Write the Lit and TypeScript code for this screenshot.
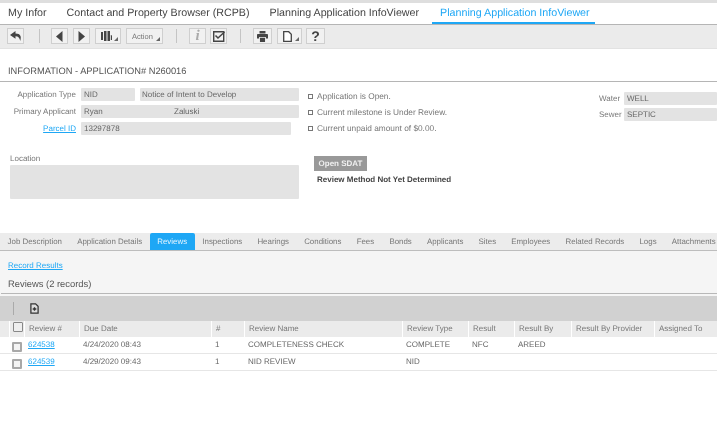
import { LitElement, html, css, svg } from "lit";
import { customElement } from "lit/decorators.js";

const caret = svg`<svg class="caret" width="4" height="4" viewBox="0 0 4 4"><path d="M4 0V4H0Z" fill="#666"/></svg>`;

const TABS = ["Job Description","Application Details","Reviews","Inspections","Hearings","Conditions","Fees","Bonds","Applicants","Sites","Employees","Related Records","Logs","Attachments"];
const HEAD = ["Review #","Due Date","#","Review Name","Review Type","Result","Result By","Result By Provider","Assigned To"];
const ROWS = [
  ["624538","4/24/2020 08:43","1","COMPLETENESS CHECK","COMPLETE","NFC","AREED","",""],
  ["624539","4/29/2020 09:43","1","NID REVIEW","NID","","","",""],
];

@customElement("app-root")
export class AppRoot extends LitElement {
  static styles = css`
    :host { display: block; width: 717px; height: 441px; overflow: hidden; background: #fff; font-family: "Liberation Sans", Arial, sans-serif; color: #666; text-rendering: geometricPrecision; filter: blur(0.3px); }
    a { color: #1ea7f5; text-decoration: underline; }

    .topstrip { height: 3px; background: #dedede; }
    .nav { display: flex; height: 21px; border-bottom: 1px solid #b5b5b5; }
    .nav div { padding: 0 8px; margin-right: 4px; font-size: 10.7px; line-height: 21px; color: #444; white-space: nowrap; }
    .nav .on { color: #1ea7f5; border-bottom: 2px solid #1ea7f5; height: 21px; box-sizing: border-box; margin-left: 1px; padding-right: 5px; }

    .toolbar { display: flex; align-items: center; gap: 5px; padding: 0 0 1px 7px; background: #ebebeb; border-bottom: 1px solid #e2e2e2; box-sizing: border-box; height: 24px; }
    .btn { position: relative; display: flex; align-items: center; justify-content: center; height: 16px; width: 17px; box-sizing: border-box; border: 1px solid #cfcfcf; background: #f1f1f1; }
    .btn.w19 { width: 19px; }
    .btn.w25 { width: 25px; }
    .btn.w26 { width: 26px; }
    .btn.tight { margin-left: -1px; }
    .btn.action { width: 37px; font-size: 7.5px; color: #777; }
    .caret { position: absolute; right: 2px; bottom: 2px; }
    .off { margin-right: 4px; }
    .sep { width: 1px; height: 14px; background: #c4c4c4; }
    .sep.s1 { margin: 0 6px 0 10px; }
    .sep.s2 { margin: 0 7px 0 8px; }
    .i { font: italic bold 15px "Liberation Serif", serif; color: #aaa; line-height: 14px; }
    .q { font: bold 14px "Liberation Sans", sans-serif; color: #444; line-height: 14px; }

    .title { padding: 12px 0 0 8px; font-size: 9.3px; line-height: 21px; color: #555; border-bottom: 1px solid #b5b5b5; height: 20px; }

    .form { display: flex; height: 151px; font-size: 8px; color: #666; }
    .col1 { width: 299px; padding-top: 6px; display: flex; flex-direction: column; flex: none; }
    .frow { display: flex; align-items: center; height: 13px; margin-bottom: 4px; }
    .lab { width: 76px; text-align: right; margin-right: 5px; flex: none; color: #777; }
    .fld { background: #e3e3e3; height: 13px; line-height: 13px; padding: 0 3px; box-sizing: border-box; border-radius: 1px; }
    .fld.nid { width: 54px; margin-right: 5px; }
    .fld.desc { width: 159px; padding-left: 2px; }
    .fld.name { width: 218px; display: flex; }
    .fld.name span { width: 90px; }
    .fld.parcel { width: 210px; }
    .loclab { margin: 13px 0 0 10px; line-height: 13px; color: #777; }
    .loc { margin: 0 0 0 10px; height: 34px; background: #e3e3e3; border-radius: 1px; }

    .col2 { width: 300px; flex: none; padding: 6px 0 0 9px; box-sizing: border-box; font-size: 8.3px; }
    .chk { display: flex; align-items: center; height: 16px; color: #777; }
    .chk i { width: 3px; height: 3px; border: 1px solid #777; margin-right: 4px; }
    .sdat { display: inline-block; margin: 20px 0 0 6px; background: #999; color: #f0f0f0; font-weight: bold; width: 53px; height: 15px; line-height: 15px; text-align: center; font-size: 8px; }
    .method { margin: 2px 0 0 9px; font-weight: bold; color: #444; line-height: 14px; font-size: 8px; }

    .col3 { flex: 1; padding-top: 10px; }
    .col3 .frow { margin-bottom: 3px; }
    .col3 .lab { width: 20px; }
    .col3 .fld { width: 93px; }

    .tabs { display: flex; height: 17px; background: #ececec; border-bottom: 1px solid #bdbdbd; font-size: 7.9px; color: #777; }
    .tabs div { padding: 0 7.6px; line-height: 18px; white-space: nowrap; }
    .tabs .on { background: #1ea7f5; color: #e8f6ff; border-radius: 2px 2px 0 0; }

    .sub { background: #f5f5f5; height: 45px; padding-left: 1px; box-sizing: border-box; }
    .sub a { display: block; font-size: 8px; padding: 9px 0 0 7px; line-height: 11px; }
    .subt { font-size: 9.4px; color: #555; padding: 6px 0 0 7px; line-height: 13px; height: 23px; border-bottom: 1px solid #b8b8b8; box-sizing: border-box; }

    .gbar { display: flex; align-items: center; height: 25px; background: #d1d1d1; padding-left: 13px; }
    .gbar .s { width: 1px; height: 13px; background: #aaa; margin-right: 16px; }

    .row { display: grid; grid-template-columns: 10px 14px 55px 132px 33px 158px 66px 46px 57px 83px 63px; font-size: 8px; color: #666; }
    .hd { height: 16px; line-height: 15px; background: #ebebeb; color: #777; }
    .hd > div { border-left: 1px solid #fff; padding-left: 4px; box-sizing: border-box; white-space: nowrap; }
    .hd > .cb { border-left: 0; padding: 0; }
    .hd > .e { border: 0; padding: 0; border-right: 1px solid #fff; }
    .rw { height: 17px; line-height: 15px; border-bottom: 1px solid #e6e6e6; box-sizing: border-box; }
    .rw > div { padding-left: 4px; box-sizing: border-box; white-space: nowrap; }
    .rw > .n { padding: 0; }
    .box { display: block; border: 2px solid #a8a8a8; border-radius: 1px; box-sizing: border-box; background: #f4f4f4; }
    .cb { display: flex; align-items: flex-start; }
    .hd .box { width: 10px; height: 10px; border-color: #888; border-width: 1.5px; background: #eee; margin: 1px 0 0 3px; }
    .rw .box { margin: 5px 0 0 2px; width: 10px; height: 10px; }
  `;

  render() {
    return html`
      <div class="topstrip"></div>
      <div class="nav">
        <div>My Infor</div>
        <div>Contact and Property Browser (RCPB)</div>
        <div>Planning Application InfoViewer</div>
        <div class="on">Planning Application InfoViewer</div>
      </div>
      <div class="toolbar">
        <div class="btn"><svg width="12" height="10" viewBox="0 0 12 10"><path d="M5.500 0 0 4 5.500 7.800V5.300C8.300 5.300 9.800 7 10.200 10 11.600 6 10.800 2.600 5.500 2.600Z" fill="#444"/></svg></div>
        <div class="sep s1"></div>
        <div class="btn"><svg width="7" height="11" viewBox="0 0 7 11"><path d="M6.500 0V11L0 5.500Z" fill="#444"/></svg></div>
        <div class="btn"><svg width="7" height="11" viewBox="0 0 7 11"><path d="M.5 0V11L7 5.500Z" fill="#444"/></svg></div>
        <div class="btn w26"><svg class="off" width="11" height="10" viewBox="0 0 11 10"><path d="M0 1h2v8H0zM3 0h2.500v10H3zM6.500 0H9v10H6.500zM9.800 4l1.200.5V9H9.800z" fill="#444"/></svg>${caret}</div>
        <div class="btn action">Action&nbsp;&nbsp;${caret}</div>
        <div class="sep s2"></div>
        <div class="btn"><span class="i">i</span></div>
        <div class="btn tight"><svg width="12" height="11" viewBox="0 0 12 11"><path d="M.7.700h10v9.600H.7z" fill="none" stroke="#444" stroke-width="1.400"/><path d="M2.500 4.500 5 7 11.500 1" fill="none" stroke="#444" stroke-width="1.500"/></svg></div>
        <div class="sep s2"></div>
        <div class="btn w19"><svg width="11" height="11" viewBox="0 0 13 13"><path d="M3 0h7v3H3zM1 3.500h11q1 0 1 1V9h-2.500V7h-8v2H0V4.500q0-1 1-1zM3.500 8h6v5h-6z" fill="#444"/></svg></div>
        <div class="btn w25"><svg class="off" width="9" height="11" viewBox="0 0 9 11"><path d="M.7.700h5l2.600 2.600v7H.7z" fill="#fff" stroke="#444" stroke-width="1.300"/></svg>${caret}</div>
        <div class="btn tight w19"><span class="q">?</span></div>
      </div>

      <div class="title">INFORMATION - APPLICATION# N260016</div>

      <div class="form">
        <div class="col1">
          <div class="frow"><div class="lab">Application Type</div><div class="fld nid">NID</div><div class="fld desc">Notice of Intent to Develop</div></div>
          <div class="frow"><div class="lab">Primary Applicant</div><div class="fld name"><span>Ryan</span><span>Zaluski</span></div></div>
          <div class="frow"><div class="lab"><a href="#">Parcel ID</a></div><div class="fld parcel">13297878</div></div>
          <div class="loclab">Location</div>
          <div class="loc"></div>
        </div>
        <div class="col2">
          <div class="chk"><i></i>Application is Open.</div>
          <div class="chk"><i></i>Current milestone is Under Review.</div>
          <div class="chk"><i></i>Current unpaid amount of $0.00.</div>
          <div class="sdat">Open SDAT</div>
          <div class="method">Review Method Not Yet Determined</div>
        </div>
        <div class="col3">
          <div class="frow"><div class="lab">Water</div><div class="fld">WELL</div></div>
          <div class="frow"><div class="lab">Sewer</div><div class="fld">SEPTIC</div></div>
        </div>
      </div>

      <div class="tabs">${TABS.map(t => html`<div class="${t === "Reviews" ? "on" : ""}">${t}</div>`)}</div>
      <div class="sub">
        <a href="#">Record Results</a>
        <div class="subt">Reviews (2 records)</div>
      </div>
      <div class="gbar">
        <div class="s"></div>
        <svg width="9" height="11" viewBox="0 0 10 12"><path d="M1 .8h5.200L9 3.600V11.200H1z" fill="#ddd" stroke="#333" stroke-width="1.400"/><path d="M5 4.500v4M3 6.500h4" stroke="#333" stroke-width="1.500"/></svg>
      </div>
      <div class="row hd">
        <div class="e"></div>
        <div class="cb"><span class="box"></span></div>
        ${HEAD.map(h => html`<div>${h}</div>`)}
      </div>
      ${ROWS.map(r => html`<div class="row rw">
        <div class="n"></div>
        <div class="n"><span class="box"></span></div>
        <div><a href="#">${r[0]}</a></div>
        ${r.slice(1).map(c => html`<div>${c}</div>`)}
      </div>`)}
    `;
  }
}
